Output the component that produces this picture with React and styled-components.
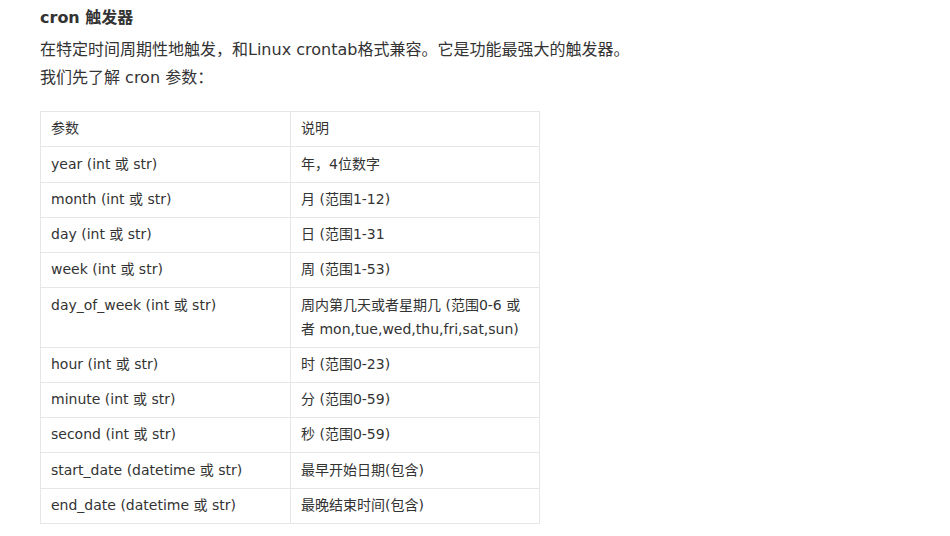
import React from 'react';
import styled, { createGlobalStyle } from 'styled-components';

const GlobalStyle = createGlobalStyle`
  body {
    margin: 0;
    background: #fff;
    font-family: "DejaVu Sans", "Noto Sans CJK SC", sans-serif;
    color: #333;
  }
`;

const Page = styled.div`
  padding: 6px 0 0 40px;
`;

const Title = styled.h3`
  margin: 0 0 6px;
  font-size: 16px;
  line-height: 24px;
  font-weight: 700;
  color: #333;
`;

const Para = styled.p`
  margin: 0;
  font-size: 16px;
  line-height: 28px;
  color: #333;
`;

const Table = styled.table`
  margin: 19px 0 0 0;
  border-collapse: collapse;
  width: 500px;
  font-size: 14px;
  line-height: 23.8px;
  table-layout: fixed;
`;

const Cell = styled.td`
  border: 1px solid #e6e6e6;
  padding: 5.25px 10px;
  vertical-align: top;
  width: ${p => p.$w || 'auto'};
  color: #333;
`;

const rows = [
  ['year (int 或 str)', '年，4位数字'],
  ['month (int 或 str)', '月 (范围1-12)'],
  ['day (int 或 str)', '日 (范围1-31'],
  ['week (int 或 str)', '周 (范围1-53)'],
  ['day_of_week (int 或 str)', '周内第几天或者星期几 (范围0-6 或者 mon,tue,wed,thu,fri,sat,sun)'],
  ['hour (int 或 str)', '时 (范围0-23)'],
  ['minute (int 或 str)', '分 (范围0-59)'],
  ['second (int 或 str)', '秒 (范围0-59)'],
  ['start_date (datetime 或 str)', '最早开始日期(包含)'],
  ['end_date (datetime 或 str)', '最晚结束时间(包含)'],
];

export default function App() {
  return (
    <Page>
      <GlobalStyle />
      <Title>cron 触发器</Title>
      <Para>
        在特定时间周期性地触发，和Linux crontab格式兼容。它是功能最强大的触发器。
        <br />
        我们先了解 cron 参数：
      </Para>
      <Table>
        <tbody>
          <tr>
            <Cell $w="229px">参数</Cell>
            <Cell>说明</Cell>
          </tr>
          {rows.map(([k, v]) => (
            <tr key={k}>
              <Cell>{k}</Cell>
              <Cell>{v}</Cell>
            </tr>
          ))}
        </tbody>
      </Table>
    </Page>
  );
}
